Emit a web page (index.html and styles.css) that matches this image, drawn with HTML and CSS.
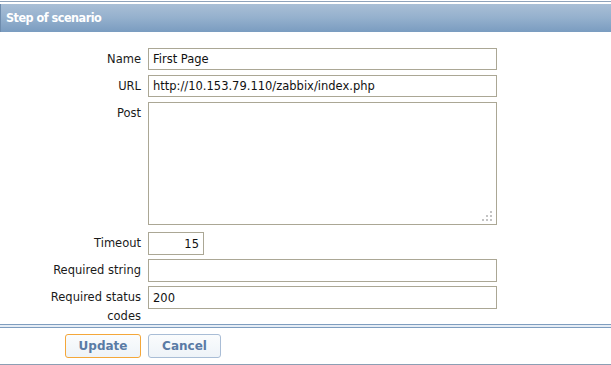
FILE: index.html
```html
<!DOCTYPE html>
<html lang="en">
<head>
  <meta charset="UTF-8">
  <title>Step of scenario</title>
  <link rel="stylesheet" href="styles.css">
</head>
<body>
  <div class="top-rule"></div>
  <div class="header">Step of scenario</div>

  <form class="step-form">
    <div class="row">
      <label for="name">Name</label>
      <input type="text" id="name" value="First Page">
    </div>
    <div class="row">
      <label for="url">URL</label>
      <input type="text" id="url" value="http://10.153.79.110/zabbix/index.php">
    </div>
    <div class="row row-post">
      <label for="post">Post</label>
      <div class="area-wrap">
        <textarea id="post"></textarea>
        <svg class="grip" width="12" height="12" viewBox="0 0 12 12">
          <rect x="9" y="1" width="2" height="2" fill="#c4c4c4"/>
          <rect x="5" y="5" width="2" height="2" fill="#c4c4c4"/>
          <rect x="9" y="5" width="2" height="2" fill="#c4c4c4"/>
          <rect x="1" y="9" width="2" height="2" fill="#c4c4c4"/>
          <rect x="5" y="9" width="2" height="2" fill="#c4c4c4"/>
          <rect x="9" y="9" width="2" height="2" fill="#c4c4c4"/>
        </svg>
      </div>
    </div>
    <div class="row row-tall">
      <label for="timeout">Timeout</label>
      <input type="text" id="timeout" class="short" value="15">
    </div>
    <div class="row row-tall">
      <label for="required">Required string</label>
      <input type="text" id="required" value="">
    </div>
    <div class="row row-tall row-last">
      <label for="status">Required status codes</label>
      <input type="text" id="status" value="200">
    </div>
  </form>

  <div class="rule"></div>
  <div class="footer">
    <button type="button" class="btn btn-main">Update</button>
    <button type="button" class="btn btn-cancel">Cancel</button>
  </div>
</body>
</html>
```

FILE: styles.css
```css
body {
  margin: 0;
  background: #fff;
  font-family: "DejaVu Sans", Verdana, sans-serif;
  font-size: 11.5px;
  color: #1a1a1a;
}
.top-rule {
  margin-top: 1px;
  height: 1px;
  background: #8fa3bb;
}
.header {
  margin-top: 2px;
  height: 28px;
  line-height: 28px;
  padding-left: 5px;
  border-left: 1px solid #6e8cad;
  background: linear-gradient(#a9bfd6, #94b0cd 50%, #7a9cc0);
  color: #fff;
  font-family: "DejaVu Sans Condensed", "DejaVu Sans", sans-serif;
  font-weight: bold;
  font-size: 12.5px;
  letter-spacing: -0.5px;
}
.step-form {
  padding-top: 16px;
}
.row {
  display: grid;
  grid-template-columns: 95px 349px;
  column-gap: 7px;
  margin-left: 46px;
  margin-bottom: 5px;
}
.row-post {
  margin-bottom: 7px;
}
.row-tall {
  margin-bottom: 4px;
}
.row-last {
  margin-bottom: -2px;
}
.row label {
  text-align: right;
  padding-top: 2px;
  line-height: 19px;
}
input, textarea {
  box-sizing: border-box;
  width: 349px;
  height: 22px;
  margin: 0;
  padding: 1px 4px;
  border: 1px solid #aba795;
  background: #fff;
  font-family: "DejaVu Sans", Verdana, sans-serif;
  font-size: 11.5px;
  color: #111;
}
.row-tall input {
  height: 23px;
}
input.short {
  width: 56px;
  text-align: right;
}
.area-wrap {
  position: relative;
  height: 123px;
}
textarea {
  display: block;
  height: 123px;
  resize: none;
}
.grip {
  position: absolute;
  right: 4px;
  bottom: 3px;
}
.rule {
  height: 2px;
  border-top: 1px solid #7f9dbf;
  border-bottom: 1px solid #7f9dbf;
  background: #e6edf5;
}
.footer {
  display: flex;
  gap: 7px;
  padding: 6px 0 6px 65px;
  border-bottom: 1px solid #8c9fb4;
}
.btn {
  box-sizing: border-box;
  height: 24px;
  padding: 0;
  border: 1px solid #a9bdd6;
  border-radius: 3px;
  background: linear-gradient(#fafcfd, #eef3f8);
  color: #5a7ba5;
  font-family: "DejaVu Sans", Verdana, sans-serif;
  font-size: 12px;
  font-weight: bold;
}
.btn-main {
  width: 76px;
  border-color: #f4a73a;
}
.btn-cancel {
  width: 73px;
}
```
